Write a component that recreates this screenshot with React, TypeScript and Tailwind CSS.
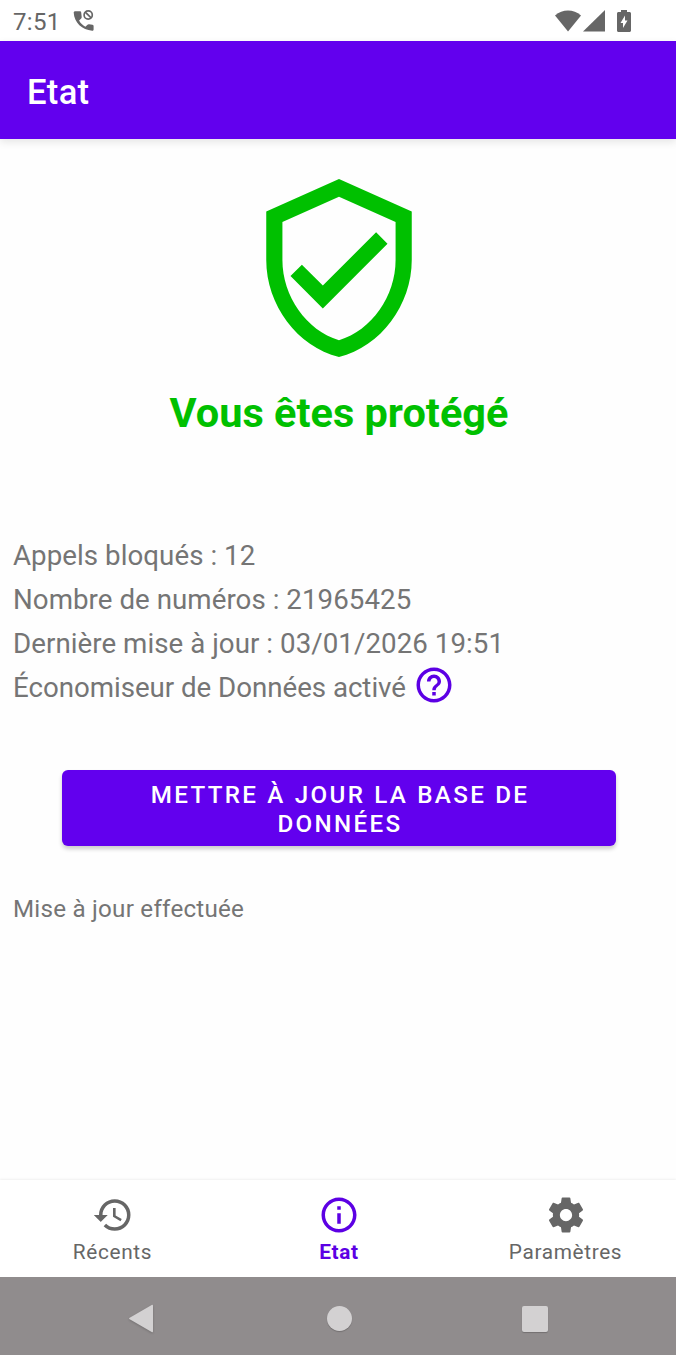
import { MdHelpOutline, MdHistory, MdInfoOutline } from "react-icons/md";

const infos = [
  "Appels bloqués : 12",
  "Nombre de numéros : 21965425",
  "Dernière mise à jour : 03/01/2026 19:51",
];

function BlockedCallIcon() {
  return (
    <svg className="h-6 w-6" viewBox="0 0 24 24" fill="none">
      <path
        fill="#666"
        d="M20.500 15.700l-3.500-.5c-.6-.1-1.100.1-1.500.5l-2.100 2.100c-2.700-1.500-4.900-3.600-6.300-6.300l2.100-2.100c.4-.4.600-1 .5-1.500L9.200 3.500C9.100 2.700 8.500 2.200 7.800 2.200H3.200C2.400 2.200 1.700 2.800 1.700 3.600 2.200 13.700 10.200 21.300 20.200 21.700c.8 0 1.400-.5 1.400-1.300v-3.400c0-.7-.4-1.200-1.100-1.300z"
      />
      <circle cx="16.200" cy="6" r="4.100" stroke="#666" strokeWidth="1.700" />
      <path d="M13.300 3.100l5.800 5.800" stroke="#666" strokeWidth="1.700" />
    </svg>
  );
}

function StatusBar() {
  return (
    <div className="flex h-[41px] items-center bg-white pl-[13px] pr-[45px] text-[#666]">
      <span className="mt-[2px] w-[59px] text-[24px] leading-none tracking-[0.350px]">7:51</span>
      <BlockedCallIcon />
      <div className="ml-auto flex items-center">
        <svg className="h-[22px] w-[26px]" viewBox="0 0 26 22" fill="currentColor">
          <path d="M13 21.500L0 5.500C7.500-1.200 18.500-1.200 26 5.500z" />
        </svg>
        <svg className="ml-[2px] h-[22px] w-[22px]" viewBox="0 0 22 22" fill="currentColor">
          <path d="M0 21.500L22 0v21.500z" />
        </svg>
        <svg className="ml-[12px] h-[22px] w-[14px]" viewBox="0 0 14 22" fill="currentColor">
          <path d="M4 0h6v2h2.500c.8 0 1.500.7 1.500 1.500v17c0 .8-.7 1.500-1.500 1.500h-11C.7 22 0 21.300 0 20.500v-17C0 2.700.7 2 1.500 2H4zM8 5.500l-4.500 7.500H6v5l4.500-7.500H8z" />
        </svg>
      </div>
    </div>
  );
}

function ShieldIcon() {
  return (
    <svg className="h-[194px] w-[194px]" viewBox="0 0 24 24" fill="#00c000">
      <path d="M12 1L3 5v6c0 5.550 3.840 10.740 9 12 5.160-1.260 9-6.450 9-12V5l-9-4zm7 10c0 4.520-2.980 8.690-7 9.930-4.020-1.240-7-5.410-7-9.930V6.300l7-3.110 7 3.110V11zm-11.590.590L6 13l4 4 8-8-1.410-1.420L10 14.170z" />
    </svg>
  );
}

function GearIcon() {
  return (
    <svg className="h-[42px] w-[42px]" viewBox="0 0 24 24" fill="currentColor">
      <path d="M19.430 12.980c.040-.320.070-.640.070-.980s-.030-.660-.070-.980l2.110-1.650c.190-.150.240-.420.120-.640l-2-3.460c-.120-.220-.390-.300-.610-.220l-2.490 1c-.520-.400-1.080-.730-1.690-.980l-.380-2.650C14.460 2.180 14.250 2 14 2h-4c-.250 0-.460.180-.490.420l-.380 2.650c-.610.250-1.170.590-1.690.980l-2.490-1c-.230-.090-.490 0-.610.220l-2 3.460c-.130.220-.070.490.120.640l2.110 1.650c-.040.320-.070.650-.070.980s.030.660.070.980l-2.110 1.650c-.190.150-.240.420-.120.640l2 3.460c.120.220.390.300.610.220l2.490-1c.520.400 1.080.730 1.690.980l.380 2.650c.030.240.240.420.490.420h4c.250 0 .460-.180.490-.420l.380-2.650c.610-.250 1.170-.590 1.690-.980l2.490 1c.230.090.490 0 .610-.220l2-3.460c.120-.220.070-.490-.120-.640l-2.110-1.650zM12 15.500c-1.930 0-3.500-1.570-3.500-3.500s1.570-3.500 3.500-3.500 3.500 1.570 3.500 3.500-1.570 3.500-3.500 3.500z" />
    </svg>
  );
}

function BottomTabs() {
  return (
    <nav className="flex h-[97px] items-start bg-white pt-[14px] text-[20.800px] tracking-[0.650px] text-[#666] shadow-[0_-1px_2px_rgba(0,0,0,0.06)]">
      <button className="flex w-[225px] shrink-0 flex-col items-center">
        <MdHistory className="h-[42px] w-[42px]" />
        <span className="mt-[4px] leading-[24px]">Récents</span>
      </button>
      <button className="flex w-[228px] shrink-0 flex-col items-center text-[#5c00e4]">
        <MdInfoOutline className="h-[42px] w-[42px]" />
        <span className="mt-[4px] font-bold leading-[24px]">Etat</span>
      </button>
      <button className="flex w-[225px] shrink-0 flex-col items-center">
        <GearIcon />
        <span className="mt-[4px] leading-[24px]">Paramètres</span>
      </button>
    </nav>
  );
}

function SystemNav() {
  return (
    <div className="flex h-[78px] items-center bg-[#908c8d] pt-[5px] text-[#d3d1d2]">
      <svg className="ml-[128px] h-[30px] w-[27px] drop-shadow-[0_1px_1px_rgba(0,0,0,0.2)]" viewBox="0 0 27 30" fill="currentColor">
        <path d="M1.700 13.700L23.700 1c.8-.5 1.300 0 1.300.8v25.400c0 .8-.5 1.300-1.300.8L1.700 15.300c-.8-.4-.8-1.200 0-1.600z" />
      </svg>
      <div className="ml-[172px] h-[25px] w-[25px] rounded-full bg-[#d3d1d2] shadow-[0_1px_1px_rgba(0,0,0,0.2)]"></div>
      <div className="ml-[169.500px] h-[26px] w-[26px] rounded-[2px] bg-[#d3d1d2] shadow-[0_1px_1px_rgba(0,0,0,0.2)]"></div>
    </div>
  );
}

function App() {
  return (
    <div className="flex h-[1355px] w-[676px] flex-col overflow-hidden bg-[#fefefe] font-['Roboto',sans-serif]">
      <StatusBar />
      <header className="flex h-[97.500px] items-center bg-[#6200ee] pl-[27px] pt-[6px] text-[34.600px] font-medium tracking-[0.300px] text-white shadow-[0_3px_8px_rgba(0,0,0,0.1)]">
        <h1>Etat</h1>
      </header>
      <main className="flex flex-1 flex-col px-[13px] pt-[32px] text-[#757575]">
        <div className="flex flex-col items-center pl-[2px]">
          <ShieldIcon />
          <h2 className="mt-[23.500px] text-[41.500px] font-bold leading-[49px] text-[#00c000]">Vous êtes protégé</h2>
        </div>
        <div className="mt-[97px] text-[27.700px] leading-[44px]">
          {infos.map((info) => (
            <p key={info} className="tracking-[0.050px]">{info}</p>
          ))}
          <div className="flex items-center">
            <p className="tracking-[-0.030px]">Économiseur de Données activé</p>
            <MdHelpOutline className="-mt-[6px] ml-[7px] h-[42px] w-[42px] text-[#5c00e4]" />
          </div>
        </div>
        <button className="ml-[49px] mt-[60px] h-[76px] w-[554px] rounded-[6px] bg-[#6200ee] pl-[2px] pt-[4px] text-[24.200px] font-medium leading-[29px] tracking-[2.350px] [word-spacing:0.600px] text-white shadow-[0_3px_4px_rgba(0,0,0,0.2)]">
          METTRE À JOUR LA BASE DE<br />DONNÉES
        </button>
        <p className="mt-[49px] text-[24.200px] leading-[29px] tracking-[0.230px]">Mise à jour effectuée</p>
      </main>
      <BottomTabs />
      <SystemNav />
    </div>
  );
}

export default App;
